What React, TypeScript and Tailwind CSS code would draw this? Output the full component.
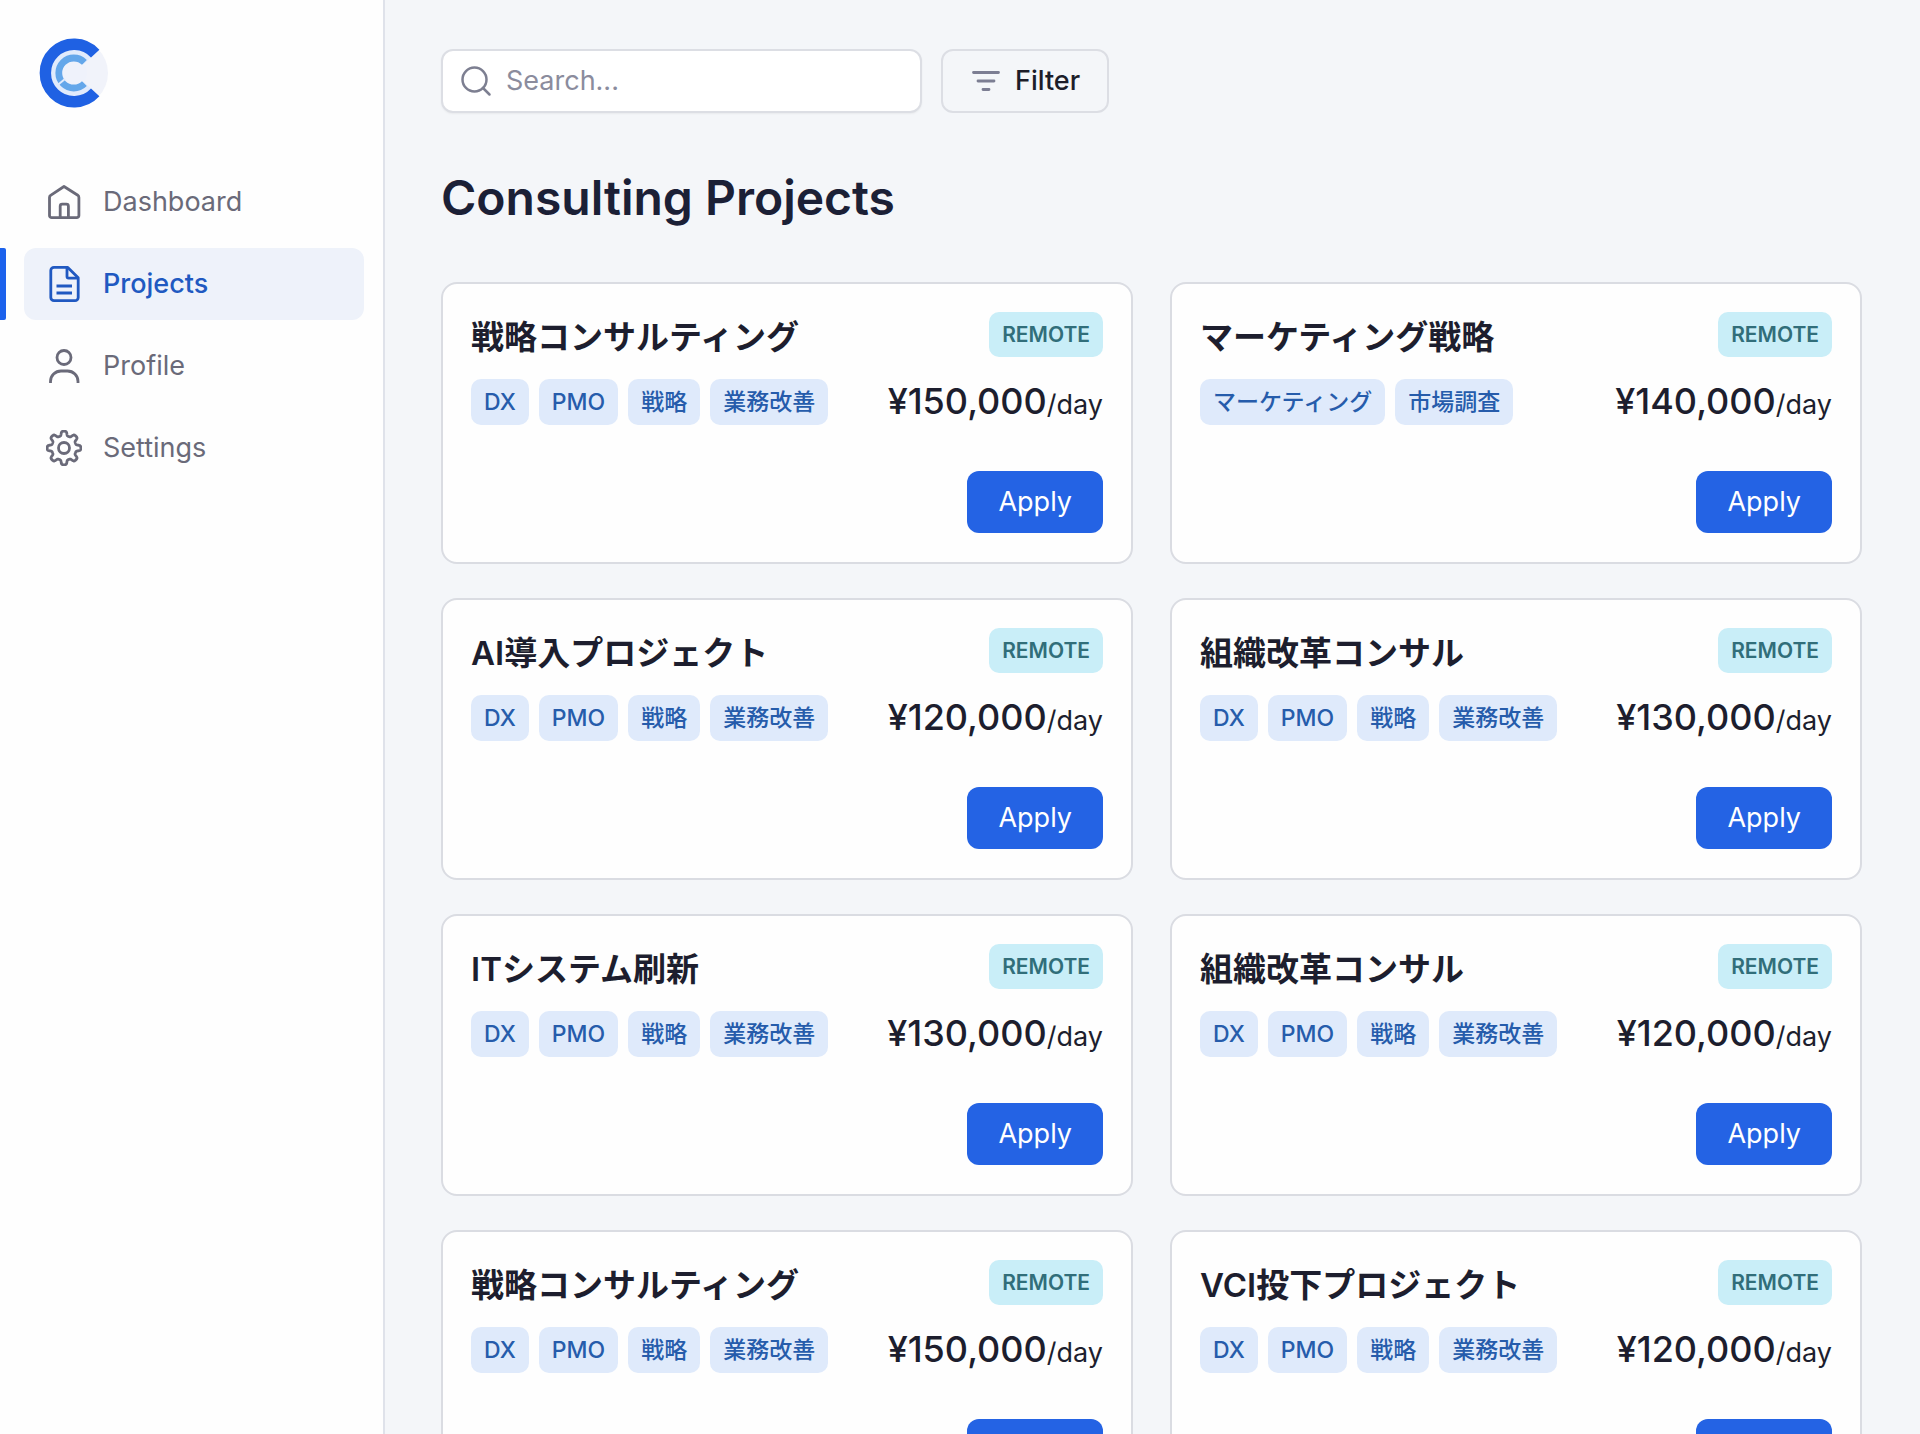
import type { ReactNode } from "react";

interface Project {
  id: number;
  title: string;
  tags: string[];
  rate: string;
}

const DEFAULT_TAGS = ["DX", "PMO", "戦略", "業務改善"];

const PROJECTS: Project[] = [
  { id: 1, title: "戦略コンサルティング", tags: DEFAULT_TAGS, rate: "¥150,000" },
  { id: 2, title: "マーケティング戦略", tags: ["マーケティング", "市場調査"], rate: "¥140,000" },
  { id: 3, title: "AI導入プロジェクト", tags: DEFAULT_TAGS, rate: "¥120,000" },
  { id: 4, title: "組織改革コンサル", tags: DEFAULT_TAGS, rate: "¥130,000" },
  { id: 5, title: "ITシステム刷新", tags: DEFAULT_TAGS, rate: "¥130,000" },
  { id: 6, title: "組織改革コンサル", tags: DEFAULT_TAGS, rate: "¥120,000" },
  { id: 7, title: "戦略コンサルティング", tags: DEFAULT_TAGS, rate: "¥150,000" },
  { id: 8, title: "VCI投下プロジェクト", tags: DEFAULT_TAGS, rate: "¥120,000" },
];

// Eight rounded teeth: the radius follows a flattened cosine around the hub.
function gearPath(): string {
  const points: string[] = [];
  for (let i = 0; i < 240; i++) {
    const a = (i / 240) * Math.PI * 2;
    const wave = Math.tanh(2.2 * Math.cos(8 * a)) / Math.tanh(2.2);
    const r = 14.6 + 2.2 * wave;
    points.push(`${(18 + r * Math.sin(a)).toFixed(2)} ${(18 - r * Math.cos(a)).toFixed(2)}`);
  }
  return `M${points.join("L")}Z`;
}

const GEAR = gearPath();

function Icon({ children }: { children: ReactNode }) {
  return (
    <svg
      viewBox="0 0 36 36"
      className="h-9 w-9 shrink-0"
      fill="none"
      stroke="currentColor"
      strokeWidth="2.8"
      strokeLinejoin="round"
      aria-hidden="true"
    >
      {children}
    </svg>
  );
}

const NAV_ITEMS = [
  {
    label: "Dashboard",
    icon: (
      <Icon>
        <path d="M18 2.5 4.6 11.3Q3.5 12 3.5 13.4V31.5a2.2 2.2 0 0 0 2.2 2.2h25a2.2 2.2 0 0 0 2.2-2.2V13.4q0-1.4-1.1-2.1Z" />
        <path d="M14.2 33.5V22.2a2 2 0 0 1 2-2h4.2a2 2 0 0 1 2 2v11.3" />
      </Icon>
    ),
  },
  {
    label: "Projects",
    active: true,
    icon: (
      <Icon>
        <path d="M21.8 1.4H8A3.2 3.2 0 0 0 4.8 4.6v26.8A3.2 3.2 0 0 0 8 34.6h21a3.2 3.2 0 0 0 3.2-3.2V11.7Z" />
        <path d="M21 1.6v9a1.6 1.6 0 0 0 1.6 1.6h9.2" />
        <path d="M10.5 20h15.5M10.5 27h15.5" />
      </Icon>
    ),
  },
  {
    label: "Profile",
    icon: (
      <Icon>
        <circle cx="18" cy="9.5" r="7" />
        <path d="M4.5 35v-1.5A10.5 10.5 0 0 1 15 23h6.5A10.5 10.5 0 0 1 32 33.5V35" />
      </Icon>
    ),
  },
  {
    label: "Settings",
    icon: (
      <Icon>
        <path d={GEAR} />
        <circle cx="18" cy="18" r="5.5" />
      </Icon>
    ),
  },
];

function Logo() {
  return (
    <svg viewBox="0 0 70 70" className="h-[70px] w-[70px]" role="img" aria-label="Logo">
      <circle cx="35" cy="35" r="34" fill="#f1f3fa" />
      <path d="M60 12 35 35 60 58A34 34 0 1 1 60 12Z" fill="#e1ebfc" />
      <circle cx="35" cy="35" r="13" fill="#eff2fb" />
      <path d="M56.2 15.6A28.7 28.7 0 1 0 56.2 54.4" fill="none" stroke="#1f61e3" strokeWidth="11.4" />
      <path d="M45.4 24.4A15 15 0 1 0 45.4 45.6" fill="none" stroke="#64a7ea" strokeWidth="6.8" />
      <path d="M18 47.5 26 41" stroke="#e1ebfc" strokeWidth="2" />
    </svg>
  );
}

function Sidebar() {
  return (
    <aside className="w-[385px] shrink-0 border-r-2 border-[#dfe2ea] bg-[#fefefe]">
      <div className="px-[39px] pt-[38px]">
        <Logo />
      </div>
      <nav className="mt-[58px] flex flex-col gap-[10px]">
        {NAV_ITEMS.map((item) => (
          <div key={item.label} className="flex">
            <span className={item.active ? "w-[6px] rounded-r-xs bg-[#1c62ec]" : "w-[6px]"} />
            <a
              href="#"
              aria-current={item.active ? "page" : undefined}
              className={`ml-[18px] mr-[19px] flex h-[72px] flex-1 items-center gap-[21px] rounded-xl px-[22px] text-[27px] ${
                item.active ? "bg-[#eef2fa] font-medium text-[#2059c1]" : "text-[#6a6a79]"
              }`}
            >
              {item.icon}
              {item.label}
            </a>
          </div>
        ))}
      </nav>
    </aside>
  );
}

function ProjectCard({ project }: { project: Project }) {
  return (
    <article className="flex h-[282px] flex-col rounded-2xl border-2 border-[#dadce2] bg-[#fefefe] px-7 pt-7 pb-[29px]">
      <div className="flex items-start justify-between">
        <h2 className="text-[33px] leading-[50px] font-semibold text-[#1d1e2e]">{project.title}</h2>
        <span className="flex h-[45px] items-center rounded-[10px] bg-[#c9eef8] px-[13px] text-[21px] font-semibold text-[#316e7a]">
          REMOTE
        </span>
      </div>
      <div className="mt-[17px] flex items-start justify-between">
        <ul className="flex gap-[10px]">
          {project.tags.map((tag) => (
            <li
              key={tag}
              className="flex h-[46px] items-center rounded-[10px] bg-[#dfeafb] px-[13px] text-[23px] font-medium text-[#265cab]"
            >
              {tag}
            </li>
          ))}
        </ul>
        <p className="text-[36px] leading-[44px] font-medium text-[#1d1e2e]">
          {project.rate}
          <span className="text-[27px] leading-none font-normal">/day</span>
        </p>
      </div>
      <button
        type="button"
        className="mt-auto h-[62px] self-end rounded-xl bg-[#2463e4] px-[31px] text-[27px] text-white"
      >
        Apply
      </button>
    </article>
  );
}

export default function App() {
  return (
    <div className="flex h-screen overflow-hidden bg-[#f4f6f9] font-['Inter','Noto_Sans_CJK_JP',sans-serif]">
      <Sidebar />
      <main className="min-w-0 flex-1 overflow-y-auto pt-[49px] pr-[58px] pb-12 pl-14 [scrollbar-width:none]">
        <div className="flex gap-[19px]">
          <label className="flex h-16 w-[481px] items-center gap-[14px] rounded-xl border-2 border-[#dcdee4] bg-white px-[17px] shadow-xs">
            <svg viewBox="0 0 32 32" className="h-8 w-8 shrink-0 text-[#7d7f91]" fill="none" stroke="currentColor" strokeWidth="2.5" strokeLinecap="round" aria-hidden="true">
              <circle cx="14.5" cy="14.5" r="12" />
              <path d="m23 23 6.5 6.5" />
            </svg>
            <input
              type="text"
              aria-label="Search"
              placeholder="Search..."
              className="min-w-0 flex-1 bg-transparent text-[27px] text-[#1d1e2e] outline-none placeholder:text-[#8b8c9d]"
            />
          </label>
          <button
            type="button"
            className="flex h-16 items-center gap-[13px] rounded-xl border-2 border-[#dcdee4] px-[27px] text-[27px] font-medium text-[#1c1d29]"
          >
            <svg viewBox="0 0 32 32" className="h-8 w-8" fill="none" stroke="#7c7e93" strokeWidth="2.8" strokeLinecap="round" aria-hidden="true">
              <path d="M3.5 7.5h25M8 16h16M13 24.5h6" />
            </svg>
            Filter
          </button>
        </div>
        <h1 className="mt-[55px] text-[48px] leading-[60px] font-semibold text-[#1b2036]">
          Consulting Projects
        </h1>
        <div className="mt-[54px] grid grid-cols-2 gap-x-[37px] gap-y-[34px]">
          {PROJECTS.map((project) => (
            <ProjectCard key={project.id} project={project} />
          ))}
        </div>
      </main>
    </div>
  );
}
